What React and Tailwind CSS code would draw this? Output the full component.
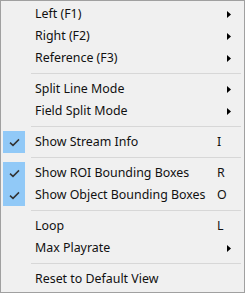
import React from "react";

const Arrow = () => (
  <svg width="4" height="7" viewBox="0 0 4 7" className="block">
    <path d="M0 0 L4 3.5 L0 7 Z" fill="#000" />
  </svg>
);

const Check = () => (
  <svg width="11" height="9" viewBox="0 0 11 9" className="block">
    <path d="M1 4.6 L4 7.4 L10 1.4" fill="none" stroke="#333" strokeWidth="1.5" />
  </svg>
);

function Row({ label, checked, shortcut, sub }) {
  return (
    <div className="flex h-[22px] items-center">
      <div
        className={
          "flex h-[22px] w-[22px] items-center justify-center " +
          (checked ? "bg-[#91c9f7]" : "")
        }
      >
        {checked ? <Check /> : null}
      </div>
      <div className="ml-[10px] flex-1 whitespace-nowrap leading-none">{label}</div>
      <div className="flex w-[25px] items-center">
        {shortcut ? <span className="leading-none">{shortcut}</span> : null}
        {sub ? (
          <span className="ml-[10px]">
            <Arrow />
          </span>
        ) : null}
      </div>
    </div>
  );
}

const Sep = () => (
  <div className="flex h-[9px] items-center">
    <div className="ml-[28px] mr-[1px] h-px flex-1 bg-[#d7d7d7]" />
  </div>
);

export default function App() {
  return (
    <div
      className="box-border w-[245px] h-[293px] border border-[#a0a0a0] bg-[#f0f0f0] p-[2px] text-[12.4px] text-[#111]"
      style={{ fontFamily: '"Noto Sans", "Open Sans", sans-serif' }}
    >
      <Row label="Left (F1)" sub />
      <Row label="Right (F2)" sub />
      <Row label="Reference (F3)" sub />
      <Sep />
      <Row label="Split Line Mode" sub />
      <Row label="Field Split Mode" sub />
      <Sep />
      <Row label="Show Stream Info" checked shortcut="I" />
      <Sep />
      <Row label="Show ROI Bounding Boxes" checked shortcut="R" />
      <Row label="Show Object Bounding Boxes" checked shortcut="O" />
      <Sep />
      <Row label="Loop" shortcut="L" />
      <Row label="Max Playrate" sub />
      <Sep />
      <Row label="Reset to Default View" />
    </div>
  );
}
